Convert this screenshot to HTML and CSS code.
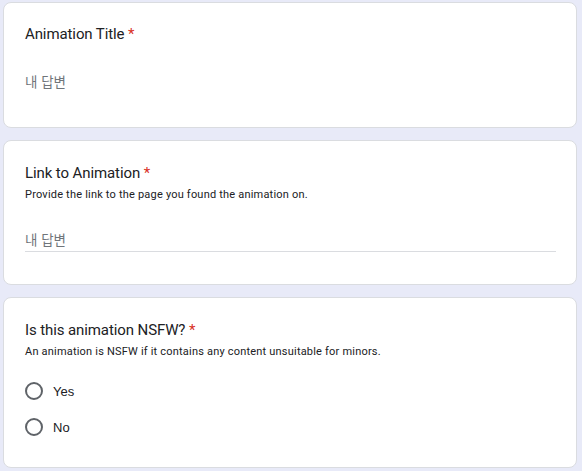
FILE: index.html
```html
<!DOCTYPE html>
<html lang="ko">
<head>
<meta charset="utf-8">
<link rel="stylesheet" href="styles.css">
</head>
<body>
<div class="form">
  <div class="card card-first">
    <div class="title">Animation Title <span class="req">*</span></div>
    <div class="answer answer-plain">내 답변</div>
  </div>
  <div class="card card-mid">
    <div class="title">Link to Animation <span class="req">*</span></div>
    <div class="desc">Provide the link to the page you found the animation on.</div>
    <div class="answer answer-line">내 답변</div>
  </div>
  <div class="card card-last">
    <div class="title">Is this animation NSFW? <span class="req">*</span></div>
    <div class="desc">An animation is NSFW if it contains any content unsuitable for minors.</div>
    <div class="options">
      <label class="option"><span class="radio"></span><span class="opt-label">Yes</span></label>
      <label class="option"><span class="radio"></span><span class="opt-label">No</span></label>
    </div>
  </div>
</div>
</body>
</html>
```
FILE: styles.css
```css
html, body {
  margin: 0;
  padding: 0;
  background: #e8eaf8;
}
body {
  width: 582px;
  height: 471px;
  overflow: hidden;
  font-family: Roboto, "Noto Sans CJK KR", sans-serif;
  color: #202124;
}
.form {
  display: flex;
  flex-direction: column;
  gap: 12px;
  padding: 2px 5px 0 3px;
}
.card {
  background: #fff;
  border: 1px solid #dadce0;
  border-radius: 8px;
  padding: 20px 22px 32px 21px;
}
.card-first {
  padding-top: 19px;
  padding-bottom: 34px;
}
.card-last {
  padding-bottom: 22px;
}
.title {
  font-size: 15px;
  line-height: 24px;
  letter-spacing: -0.1px;
}
.req {
  color: #d93025;
}
.desc {
  font-size: 11px;
  line-height: 18px;
  margin-top: 1px;
  letter-spacing: 0.2px;
}
.answer {
  font-family: "Noto Sans CJK KR", sans-serif;
  font-size: 13.5px;
  line-height: 23px;
  height: 23px;
  color: #70757a;
  margin-top: 24px;
  width: 531px;
}
.answer-line {
  border-bottom: 1px solid #dadce0;
}
.options {
  display: flex;
  flex-direction: column;
  margin-top: 12px;
}
.option {
  display: flex;
  align-items: center;
  height: 36px;
  gap: 10px;
  font-family: "Liberation Sans", Arial, sans-serif;
  font-size: 13px;
}
.radio {
  box-sizing: border-box;
  width: 18px;
  height: 18px;
  border: 2px solid #5f6368;
  border-radius: 50%;
}
```
